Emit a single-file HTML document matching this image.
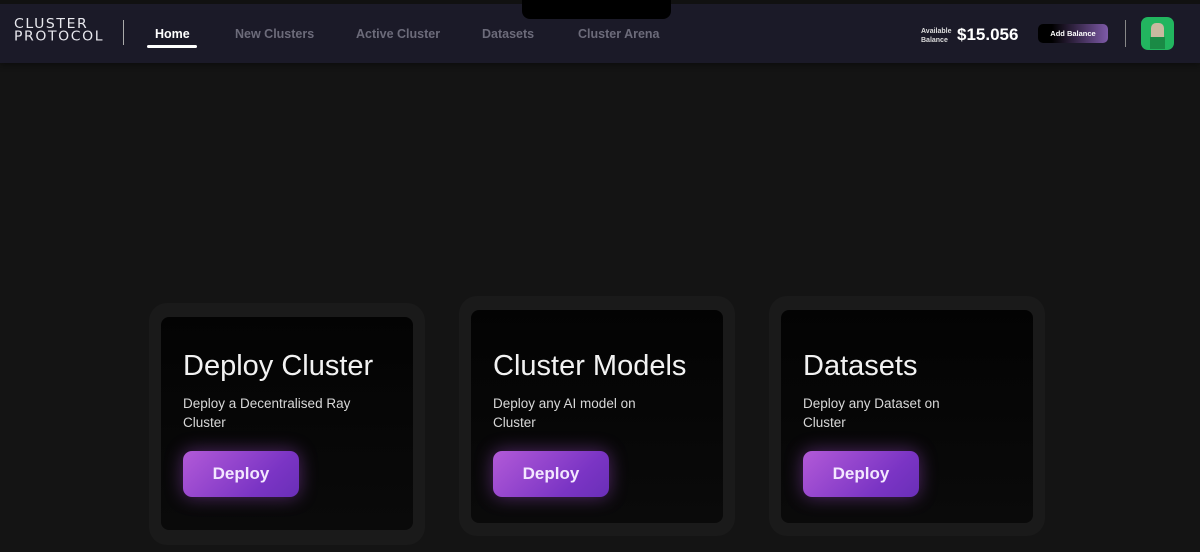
<!DOCTYPE html>
<html><head><style>
*{margin:0;padding:0;box-sizing:border-box}
body{width:1200px;height:552px;overflow:hidden;background:#141414;font-family:"Liberation Sans",sans-serif;color:#fff;position:relative}
.hdr{position:absolute;left:0;top:3px;width:1200px;height:60px;background:#1b1a28;box-shadow:0 2px 6px rgba(0,0,0,.4)}
.topbar{position:absolute;left:0;top:0;width:1200px;height:4px;background:#111}
.notch{position:absolute;left:522px;top:0;width:149px;height:19px;background:#000;border-radius:0 0 8px 8px}
.logo{position:absolute;left:14px;top:18px;font-size:14px;line-height:13px;letter-spacing:1.6px;color:#e8e8ee;font-family:"DejaVu Sans",sans-serif;transform:scaleY(0.95)}
.sep{position:absolute;width:1px;background:#aaa}
.nav{position:absolute;top:27px;font-size:12.5px;font-weight:bold;color:#6c6b7a}
.card{position:absolute;top:303px;width:276px;height:242px;background:#1a1a1a;border-radius:18px}
.inner{position:absolute;left:12px;top:14px;width:252px;height:213px;background:linear-gradient(180deg,#030303,#0a0a0a);border-radius:8px}
.t{position:absolute;left:22px;top:33px;font-size:29px;color:#f2f2f2;white-space:nowrap}
.d{position:absolute;left:22px;top:77px;font-size:13.5px;line-height:19px;color:#d8d8d8;width:185px}
.btn{position:absolute;left:22px;top:134px;width:116px;height:46px;border-radius:9px;background:linear-gradient(135deg,#b25ad8,#7a34c4 70%,#6a2fb8);box-shadow:0 0 18px rgba(170,80,220,.45);font-size:17px;font-weight:bold;text-align:center;line-height:46px;color:#f3e8ff}
</style></head><body>
<div class="hdr"></div><div class="topbar"></div><div class="notch"></div>
<div class="logo">CLUSTER<br>PROTOCOL</div>
<div class="sep" style="left:123px;top:20px;height:25px"></div>
<div class="nav" style="left:155px;color:#fff">Home</div>
<div style="position:absolute;left:147px;top:45px;width:50px;height:3px;border-radius:2px;background:#fff"></div>
<div class="nav" style="left:235px">New Clusters</div>
<div class="nav" style="left:356px">Active Cluster</div>
<div class="nav" style="left:482px">Datasets</div>
<div class="nav" style="left:578px">Cluster Arena</div>
<div style="position:absolute;left:921px;top:27px;font-size:7px;line-height:9px;font-weight:bold;color:#ddd">Available<br>Balance</div>
<div style="position:absolute;left:957px;top:25px;font-size:17px;font-weight:bold">$15.056</div>
<div style="position:absolute;left:1038px;top:24px;width:70px;height:19px;border-radius:5px;background:linear-gradient(90deg,#000 20%,#7e5aa8);font-size:7.5px;line-height:19px;text-align:center;font-weight:bold">Add Balance</div>
<div class="sep" style="left:1125px;top:20px;height:27px;background:#888"></div>
<div style="position:absolute;left:1141px;top:17px;width:33px;height:33px;border-radius:7px;background:#22b55f"><div style="position:absolute;left:10px;top:6px;width:13px;height:22px;background:#c9b9a0;border-radius:5px 5px 2px 2px"></div><div style="position:absolute;left:9px;top:20px;width:15px;height:12px;background:#1a8a45"></div></div>

<div class="card" style="left:149px"><div class="inner"><div class="t">Deploy Cluster</div><div class="d">Deploy a Decentralised Ray Cluster</div><div class="btn">Deploy</div></div></div>
<div class="card" style="left:459px;top:296px;height:240px"><div class="inner"><div class="t" style="top:40px">Cluster Models</div><div class="d" style="top:84px;width:160px">Deploy any AI model on Cluster</div><div class="btn" style="top:141px">Deploy</div></div></div>
<div class="card" style="left:769px;top:296px;height:240px"><div class="inner"><div class="t" style="top:40px">Datasets</div><div class="d" style="top:84px;width:155px">Deploy any Dataset on Cluster</div><div class="btn" style="top:141px">Deploy</div></div></div>
</body></html>
